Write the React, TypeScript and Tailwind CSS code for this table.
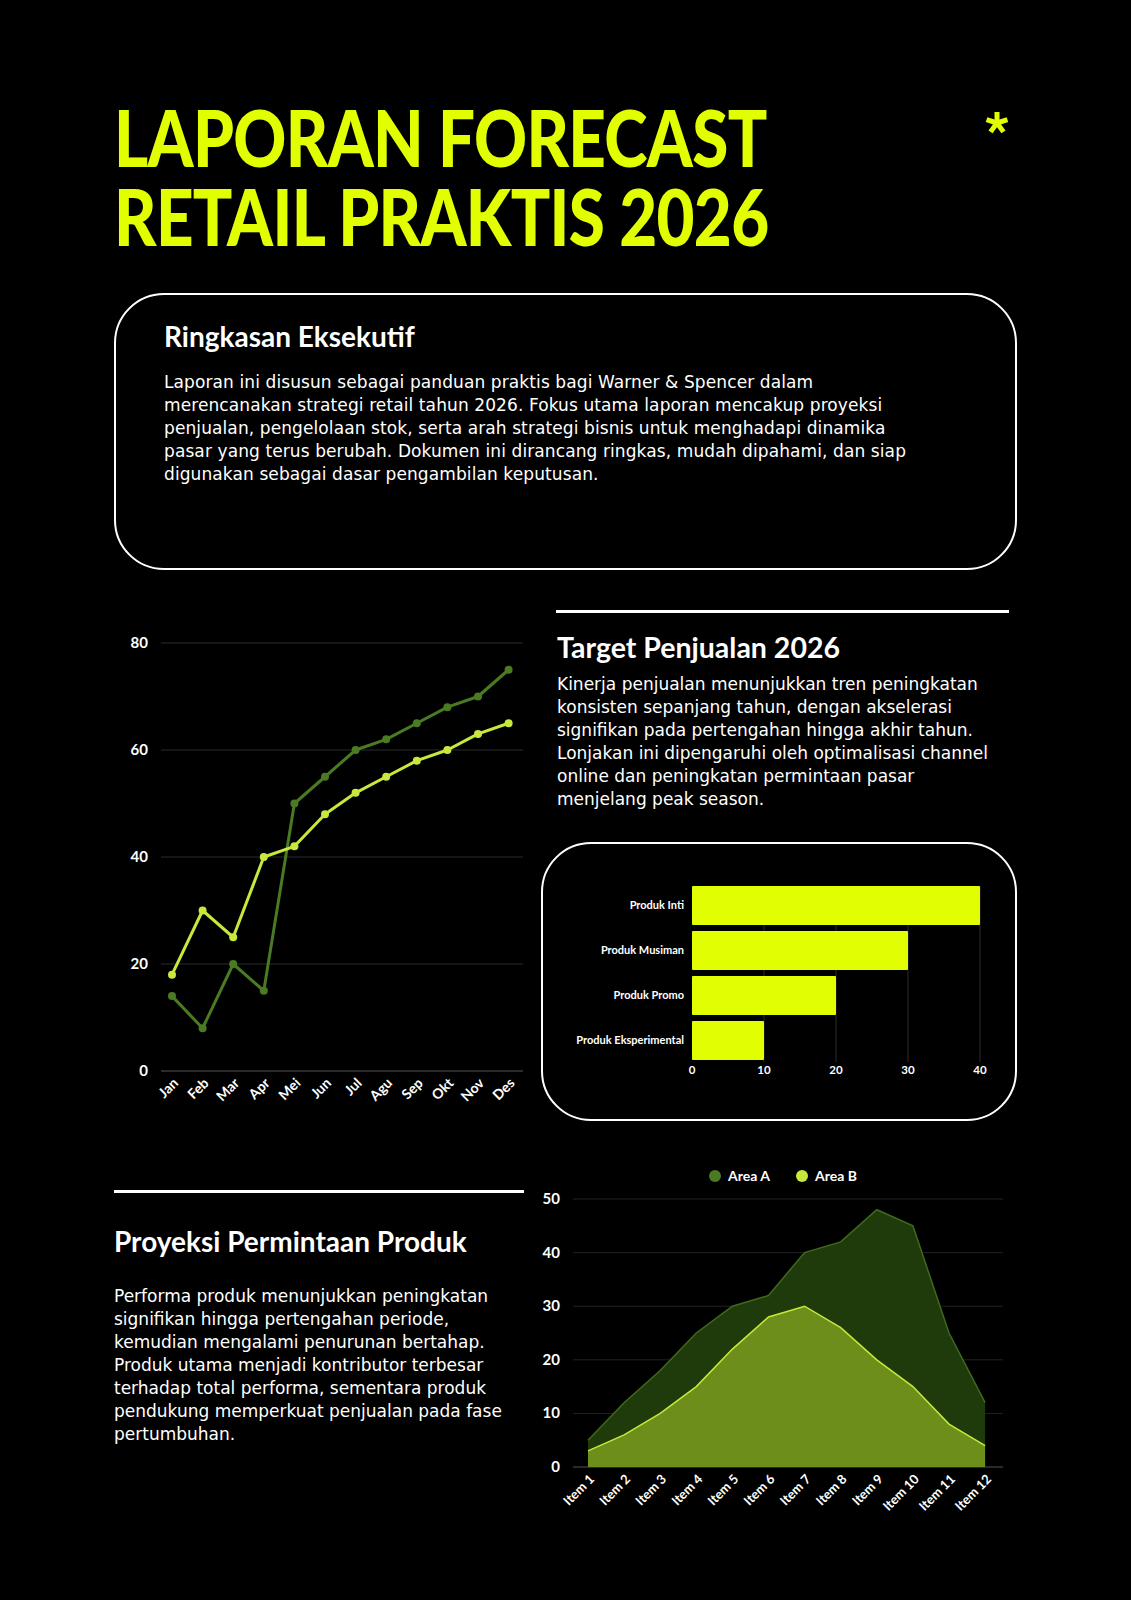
import React from 'react';

const LIME = '#e1ff00';

const months = ['Jan', 'Feb', 'Mar', 'Apr', 'Mei', 'Jun', 'Jul', 'Agu', 'Sep', 'Okt', 'Nov', 'Des'];
const salesA = [14, 8, 20, 15, 50, 55, 60, 62, 65, 68, 70, 75];
const salesB = [18, 30, 25, 40, 42, 48, 52, 55, 58, 60, 63, 65];

const products = [
    { label: 'Produk Inti', value: 40 },
    { label: 'Produk Musiman', value: 30 },
    { label: 'Produk Promo', value: 20 },
    { label: 'Produk Eksperimental', value: 10 },
];

const areaA = [5, 12, 18, 25, 30, 32, 40, 42, 48, 45, 25, 12];
const areaB = [3, 6, 10, 15, 22, 28, 30, 26, 20, 15, 8, 4];

const chartFont = { fontFamily: 'Lato, "Liberation Sans", sans-serif' };
const headFont = { fontFamily: 'Lato, "Liberation Sans", sans-serif' };

const LineChart: React.FC = () => {
    const x = (i: number) => 58 + i * 30.6;
    const y = (v: number) => 33 + (80 - v) * 5.35;
    const pts = (d: number[]) => d.map((v, i) => `${x(i)},${y(v)}`).join(' ');
    return (
        <svg width="410" height="500" viewBox="0 0 410 500" style={chartFont}>
            {[0, 20, 40, 60, 80].map((v) => (
                <g key={v}>
                    <line x1="47" x2="409" y1={y(v)} y2={y(v)} stroke={v === 0 ? '#555' : '#2a2a2a'} strokeWidth="1" />
                    <text x="34" y={y(v) + 5} textAnchor="end" fill="#fff" fontSize="15" fontWeight="700">{v}</text>
                </g>
            ))}
            <polyline points={pts(salesA)} fill="none" stroke="#4a7a22" strokeWidth="3" strokeLinejoin="round" />
            {salesA.map((v, i) => <circle key={i} cx={x(i)} cy={y(v)} r="4" fill="#4a7a22" />)}
            <polyline points={pts(salesB)} fill="none" stroke="#c6e93b" strokeWidth="3" strokeLinejoin="round" />
            {salesB.map((v, i) => <circle key={i} cx={x(i)} cy={y(v)} r="4" fill="#c6e93b" />)}
            {months.map((m, i) => (
                <text key={m} x={x(i) + 7} y="474" textAnchor="end" fill="#fff" fontSize="14" fontWeight="700" transform={`rotate(-45 ${x(i) + 7} 474)`}>{m}</text>
            ))}
        </svg>
    );
};

const BarChart: React.FC = () => {
    const x0 = 149;
    const unit = 7.2;
    return (
        <div className="mt-[31px] h-[279px] rounded-[50px] border-2 border-white">
            <svg width="472" height="275" viewBox="0 0 472 275" style={chartFont}>
                {[0, 10, 20, 30, 40].map((v) => (
                    <g key={v}>
                        {v > 0 && <line x1={x0 + v * unit} x2={x0 + v * unit} y1="42" y2="218" stroke="#2a2a2a" strokeWidth="1" />}
                        <text x={x0 + v * unit} y="230" textAnchor="middle" fill="#fff" fontSize="11.5" fontWeight="700">{v}</text>
                    </g>
                ))}
                {products.map((p, i) => (
                    <g key={p.label}>
                        <rect x={x0} y={42 + i * 45} width={p.value * unit} height="39" rx="1" fill={LIME} />
                        <text x={x0 - 8} y={42 + i * 45 + 23} textAnchor="end" fill="#fff" fontSize="11" fontWeight="700">{p.label}</text>
                    </g>
                ))}
            </svg>
        </div>
    );
};

const AreaChart: React.FC = () => {
    const x = (i: number) => 47 + i * 36.1;
    const y = (v: number) => 303 - v * 5.36;
    const area = (d: number[]) =>
        `M${x(0)},${y(0)} ` + d.map((v, i) => `L${x(i)},${y(v)}`).join(' ') + ` L${x(11)},${y(0)} Z`;
    const line = (d: number[]) => d.map((v, i) => `${i === 0 ? 'M' : 'L'}${x(i)},${y(v)}`).join(' ');
    return (
        <svg width="476" height="370" viewBox="0 0 476 370" style={chartFont}>
            <circle cx="174" cy="12" r="6" fill="#4a7a22" />
            <text x="187" y="17" fill="#fff" fontSize="14" fontWeight="700">Area A</text>
            <circle cx="261" cy="12" r="6" fill="#c6e93b" />
            <text x="274" y="17" fill="#fff" fontSize="14" fontWeight="700">Area B</text>
            {[0, 10, 20, 30, 40, 50].map((v) => (
                <g key={v}>
                    <line x1="32" x2="462" y1={y(v)} y2={y(v)} stroke={v === 0 ? '#555' : '#222'} strokeWidth="1" />
                    <text x="19" y={y(v) + 5} textAnchor="end" fill="#fff" fontSize="15" fontWeight="700">{v}</text>
                </g>
            ))}
            <path d={area(areaA)} fill="#1f3a0b" />
            <path d={line(areaA)} fill="none" stroke="#3e6b1c" strokeWidth="1.5" />
            <path d={area(areaB)} fill="#6e8e1c" />
            <path d={line(areaB)} fill="none" stroke="#c6e93b" strokeWidth="1.5" />
            {areaA.map((_, i) => (
                <text key={i} x={x(i) + 7} y="316" textAnchor="end" fill="#fff" fontSize="13" fontWeight="700" transform={`rotate(-45 ${x(i) + 7} 316)`}>{`Item ${i + 1}`}</text>
            ))}
        </svg>
    );
};

const Asterisk: React.FC = () => (
    <svg width="24" height="24" viewBox="-12 -12 24 24" className="mt-[13px]">
        {[0, 72, 144, 216, 288].map((a) => (
            <line key={a} x1="0" y1="0" x2="0" y2="-11" stroke={LIME} strokeWidth="5" transform={`rotate(${a})`} />
        ))}
    </svg>
);

export default function App() {
    return (
        <div className="min-h-[1600px] w-full bg-black text-white" style={{ fontFamily: '"DejaVu Sans", "Open Sans", sans-serif' }}>
            <div className="px-[114px] pt-[98px]">
                <header className="flex items-start justify-between pr-[8px]">
                    <h1 className="origin-left scale-x-[0.84] text-[78px] font-black uppercase leading-[79px] tracking-[-0.01em] text-[#e1ff00] whitespace-nowrap" style={headFont}>
                        <span className="block">LAPORAN FORECAST</span>
                        <span className="block">RETAIL PRAKTIS 2026</span>
                    </h1>
                    <Asterisk />
                </header>

                <section className="mt-[37px] h-[277px] rounded-[50px] border-2 border-white px-[48px] pt-[24px]">
                    <h2 className="text-[28px] font-bold leading-[34px]" style={headFont}>Ringkasan Eksekutif</h2>
                    <p className="mt-[18px] text-[17px] leading-[23px] tracking-[0.1px]">
                        Laporan ini disusun sebagai panduan praktis bagi Warner &amp; Spencer dalam
                        <br />
                        merencanakan strategi retail tahun 2026. Fokus utama laporan mencakup proyeksi
                        <br />
                        penjualan, pengelolaan stok, serta arah strategi bisnis untuk menghadapi dinamika
                        <br />
                        pasar yang terus berubah. Dokumen ini dirancang ringkas, mudah dipahami, dan siap
                        <br />
                        digunakan sebagai dasar pengambilan keputusan.
                    </p>
                </section>

                <div className="mt-[40px] grid grid-cols-[410px_476px] gap-x-[17px]">
                    <LineChart />
                    <div>
                        <div className="ml-[15px] mr-[8px] h-[3px] bg-white" />
                        <h2 className="ml-[16px] mt-[17px] text-[28.5px] font-bold leading-[34px]" style={headFont}>Target Penjualan 2026</h2>
                        <p className="ml-[16px] mt-[9px] text-[17px] leading-[23px]">
                            Kinerja penjualan menunjukkan tren peningkatan
                            <br />
                            konsisten sepanjang tahun, dengan akselerasi
                            <br />
                            signifikan pada pertengahan hingga akhir tahun.
                            <br />
                            Lonjakan ini dipengaruhi oleh optimalisasi channel
                            <br />
                            online dan peningkatan permintaan pasar
                            <br />
                            menjelang peak season.
                        </p>
                        <BarChart />
                    </div>
                </div>

                <div className="mt-[43px] grid grid-cols-[410px_476px] gap-x-[17px]">
                    <div className="pt-[26px]">
                        <div className="h-[3px] bg-white" />
                        <h2 className="mt-[31px] text-[28px] font-bold leading-[34px]" style={headFont}>Proyeksi Permintaan Produk</h2>
                        <p className="mt-[27px] text-[17px] leading-[23px]">
                            Performa produk menunjukkan peningkatan
                            <br />
                            signifikan hingga pertengahan periode,
                            <br />
                            kemudian mengalami penurunan bertahap.
                            <br />
                            Produk utama menjadi kontributor terbesar
                            <br />
                            terhadap total performa, sementara produk
                            <br />
                            pendukung memperkuat penjualan pada fase
                            <br />
                            pertumbuhan.
                        </p>
                    </div>
                    <AreaChart />
                </div>
            </div>
        </div>
    );
}
